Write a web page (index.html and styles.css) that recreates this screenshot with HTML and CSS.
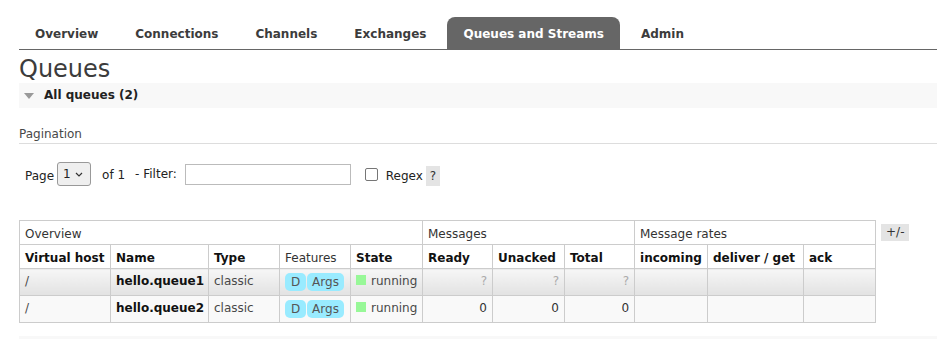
FILE: index.html
```html
<!DOCTYPE html>
<html>
<head>
    <meta charset="UTF-8">
    <title>Queues</title>
    <link rel="stylesheet" href="styles.css">
</head>
<body>
    <div id="main">
        <ul id="tabs">
            <li><a href="#">Overview</a></li>
            <li><a href="#">Connections</a></li>
            <li><a href="#">Channels</a></li>
            <li><a href="#">Exchanges</a></li>
            <li><a href="#" class="selected">Queues and Streams</a></li>
            <li><a href="#">Admin</a></li>
        </ul>

        <h1>Queues</h1>
        <h2 class="section"><span class="arrow"></span>All queues (2)</h2>

        <div class="pagination">
            <h3>Pagination</h3>
            <div class="page-row">
                <span class="label">Page</span>
                <span class="select-wrap">
                    <select id="page-select">
                        <option value="1">1</option>
                    </select>
                    <svg class="chevron" width="8" height="5" viewBox="0 0 8 5">
                        <path d="M1 1 L4 4 L7 1" fill="none" stroke="#333" stroke-width="1.2"/>
                    </svg>
                </span>
                <span class="label of">of 1</span>
                <span class="label filter">- Filter:</span>
                <input type="text" id="filter-input">
                <input type="checkbox" id="regex">
                <label for="regex" class="label regex">Regex</label>
                <span class="help">?</span>
            </div>
        </div>

        <div class="table-wrap">
            <table class="list">
                <colgroup>
                    <col style="width: 91px">
                    <col style="width: 98px">
                    <col style="width: 71px">
                    <col style="width: 71px">
                    <col style="width: 72px">
                    <col style="width: 70px">
                    <col style="width: 72px">
                    <col style="width: 70px">
                    <col style="width: 73px">
                    <col style="width: 96px">
                    <col style="width: 72px">
                </colgroup>
                <thead>
                    <tr class="group">
                        <th colspan="5">Overview</th>
                        <th colspan="3">Messages</th>
                        <th colspan="3">Message rates</th>
                    </tr>
                    <tr class="cols">
                        <th>Virtual host</th>
                        <th>Name</th>
                        <th>Type</th>
                        <th class="plain">Features</th>
                        <th>State</th>
                        <th>Ready</th>
                        <th>Unacked</th>
                        <th>Total</th>
                        <th>incoming</th>
                        <th>deliver / get</th>
                        <th>ack</th>
                    </tr>
                </thead>
                <tbody>
                    <tr class="alt1">
                        <td>/</td>
                        <td class="name">hello.queue1</td>
                        <td>classic</td>
                        <td><span class="badge">D</span> <span class="badge">Args</span></td>
                        <td><span class="state"></span>running</td>
                        <td class="num unknown">?</td>
                        <td class="num unknown">?</td>
                        <td class="num unknown">?</td>
                        <td></td>
                        <td></td>
                        <td></td>
                    </tr>
                    <tr class="alt2">
                        <td>/</td>
                        <td class="name">hello.queue2</td>
                        <td>classic</td>
                        <td><span class="badge">D</span> <span class="badge">Args</span></td>
                        <td><span class="state"></span>running</td>
                        <td class="num">0</td>
                        <td class="num">0</td>
                        <td class="num">0</td>
                        <td></td>
                        <td></td>
                        <td></td>
                    </tr>
                </tbody>
            </table>
            <span class="toggle">+/-</span>
        </div>

        <h2 class="section bottom"></h2>
    </div>
</body>
</html>
```

FILE: styles.css
```css
body {
    font: 12px "DejaVu Sans", Verdana, sans-serif;
    color: #484848;
    margin: 0;
    padding: 0;
    overflow: hidden;
}

#main {
    padding-left: 19px;
}

#tabs {
    display: flex;
    list-style: none;
    margin: 17px 0 0;
    padding: 0;
    border-bottom: 1px solid #666;
}

#tabs li {
    margin-right: 5px;
}

#tabs a {
    display: block;
    padding: 9px 16px 7px;
    line-height: 16px;
    font-weight: bold;
    color: #3c3c3c;
    text-decoration: none;
    border-radius: 8px 8px 0 0;
}

#tabs a.selected {
    background: #666;
    color: #fff;
}

h1 {
    font-size: 24px;
    font-weight: normal;
    line-height: 28px;
    margin: 5px 0 0;
    color: #3c3c3c;
}

h2.section {
    margin: 0;
    height: 25px;
    line-height: 25px;
    padding-left: 25px;
    font-size: 12px;
    font-weight: bold;
    color: #222;
    background: #f8f8f8;
    position: relative;
}

.arrow {
    position: absolute;
    left: 5px;
    top: 10px;
    width: 0;
    height: 0;
    border-left: 5px solid transparent;
    border-right: 5px solid transparent;
    border-top: 6px solid #999;
}

.pagination h3 {
    margin: 19px 0 0;
    font-size: 12px;
    font-weight: normal;
    line-height: 15px;
    padding-bottom: 1px;
    border-bottom: 1px solid #ddd;
}

.page-row {
    display: flex;
    align-items: center;
    padding: 18px 0 0 6px;
    height: 24px;
}

.label {
    color: #222;
    margin-top: 3px;
}

.select-wrap {
    position: relative;
    margin-left: 3px;
}

#page-select {
    appearance: none;
    -webkit-appearance: none;
    width: 34px;
    height: 24px;
    padding: 0 0 0 5px;
    font: 12px "DejaVu Sans", Verdana, sans-serif;
    color: #222;
    background: #efefef;
    border: 1px solid #999;
    border-radius: 3px;
}

.chevron {
    position: absolute;
    right: 8px;
    top: 10px;
}

.of {
    margin-left: 11px;
    margin-top: 1px;
}

.filter {
    margin-left: 10px;
    margin-top: -1px;
}

#filter-input {
    width: 166px;
    height: 21px;
    box-sizing: border-box;
    margin: 0 0 0 8px;
    border: 1px solid #bbb;
    padding: 0 3px;
}

#regex {
    appearance: none;
    -webkit-appearance: none;
    width: 13px;
    height: 13px;
    margin: 0 0 0 14px;
    border: 1px solid #767676;
    border-radius: 2px;
    background: #fff;
}

.regex {
    margin-left: 8px;
    margin-top: 4px;
}

.help {
    margin-left: 3px;
    margin-top: 4px;
    width: 14px;
    height: 20px;
    line-height: 20px;
    text-align: center;
    background: #e4e4e4;
    color: #333;
}

.table-wrap {
    display: flex;
    align-items: flex-start;
    margin-top: 34px;
}

table.list {
    table-layout: fixed;
    width: 856px;
    border-collapse: collapse;
    border: 1px solid #ccc;
}

table.list th,
table.list td {
    border: 1px solid #ccc;
    padding: 6px 5px 2px;
    line-height: 15px;
    text-align: left;
    white-space: nowrap;
    overflow: hidden;
}

table.list tr.group th {
    font-weight: normal;
    color: #333;
}

table.list tr.cols th {
    font-weight: bold;
    color: #111;
}

table.list tr.cols th.plain {
    font-weight: normal;
    color: #333;
}

table.list td {
    vertical-align: top;
    padding-top: 5px;
    padding-bottom: 4px;
    height: 17px;
}

tr.alt1 td {
    background: linear-gradient(#f6f6f6, #e2e2e2);
}

tr.alt2 td {
    background: #f9f9f9;
}

table.list td.name {
    font-weight: bold;
    color: #111;
}

table.list td.num {
    text-align: right;
    color: #333;
}

table.list td.unknown {
    color: #aaa;
}

.badge {
    display: inline-block;
    vertical-align: top;
    margin-top: -1px;
    padding: 2px 6px;
    line-height: 14px;
    border-radius: 5px;
    background: #99ebff;
    color: #555;
}

.badge + .badge {
    margin-left: -3px;
    padding: 2px 5px;
}

.state {
    display: inline-block;
    width: 10px;
    height: 10px;
    margin-right: 5px;
    background: #98f898;
}

.toggle {
    margin: 4px 0 0 5px;
    padding: 0 5px;
    line-height: 17px;
    background: #e4e4e4;
    color: #333;
}

h2.section.bottom {
    margin-top: 13px;
}
```
